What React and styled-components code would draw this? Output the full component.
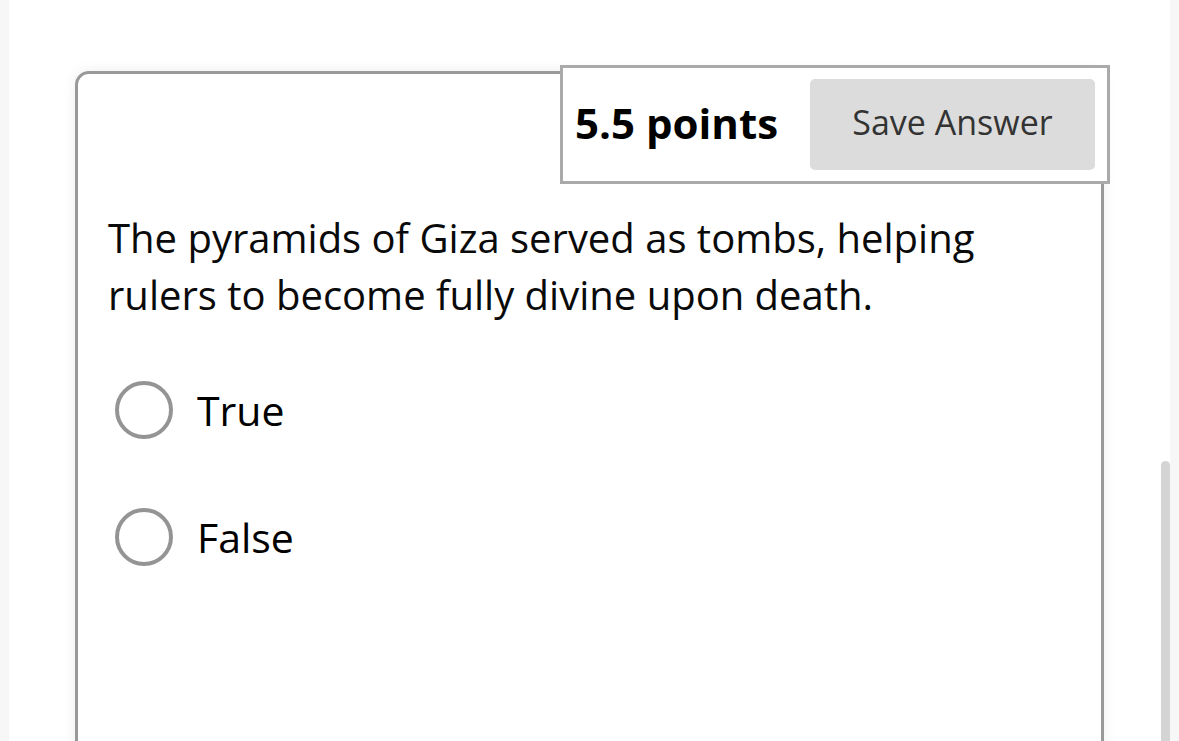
import React from "react";
import styled, { createGlobalStyle } from "styled-components";

const GlobalStyle = createGlobalStyle`
	html, body {
		margin: 0;
		padding: 0;
		background: #f7f7f7;
		font-family: "Open Sans", "Noto Sans", sans-serif;
		overflow: hidden;
	}
`;

const Page = styled.div`
	position: relative;
	margin: 0 9px;
	height: 741px;
	background: #fff;
	padding: 71px 0 0 66px;
	box-sizing: border-box;
	overflow: hidden;
`;

const ScrollThumb = styled.div`
	position: absolute;
	right: 0;
	top: 461px;
	width: 9px;
	height: 300px;
	border-radius: 5px 5px 0 0;
	background: #d4d4d4;
`;

const Card = styled.div`
	position: relative;
	width: 1029px;
	height: 720px;
	box-sizing: border-box;
	border: 3px solid #999;
	border-radius: 14px;
	background: #fff;
	box-shadow: 0 0 14px rgba(0, 0, 0, 0.07);
	padding: 135px 30px 0 30px;
`;

const PointsBox = styled.div`
	position: absolute;
	top: -9px;
	right: -9px;
	width: 550px;
	height: 119px;
	box-sizing: border-box;
	border: 3px solid #aaa;
	background: #fff;
	display: flex;
	align-items: center;
	justify-content: space-between;
	padding: 0 12px 0 12px;
`;

const Points = styled.span`
	font-size: 42px;
	font-weight: 700;
	color: #000;
	margin-top: -4px;
`;

const SaveButton = styled.button`
	width: 285px;
	height: 91px;
	border: none;
	border-radius: 5px;
	background: #dcdcdc;
	color: #333;
	font-family: "Open Sans", "Noto Sans", sans-serif;
	font-size: 34px;
	padding: 0 0 6px;
	cursor: pointer;
`;

const Question = styled.p`
	margin: 0;
	font-size: 40px;
	line-height: 57px;
	color: #0a0a0a;
`;

const Options = styled.div`
	display: flex;
	flex-direction: column;
	gap: 69px;
	margin: 58px 0 0 7px;
`;

const Option = styled.label`
	display: flex;
	align-items: center;
	gap: 24px;
	font-size: 41px;
	color: #000;
	cursor: pointer;
`;

const Radio = styled.span`
	width: 58px;
	height: 58px;
	box-sizing: border-box;
	border: 4px solid #949494;
	border-radius: 50%;
	flex-shrink: 0;
`;

export default function App() {
	return (
		<>
			<GlobalStyle />
			<Page>
				<Card>
					<PointsBox>
						<Points>5.5 points</Points>
						<SaveButton>Save Answer</SaveButton>
					</PointsBox>
					<Question>
						The pyramids of Giza served as tombs, helping
						<br />
						rulers to become fully divine upon death.
					</Question>
					<Options>
						<Option>
							<Radio />
							True
						</Option>
						<Option>
							<Radio />
							False
						</Option>
					</Options>
				</Card>
				<ScrollThumb />
			</Page>
		</>
	);
}
